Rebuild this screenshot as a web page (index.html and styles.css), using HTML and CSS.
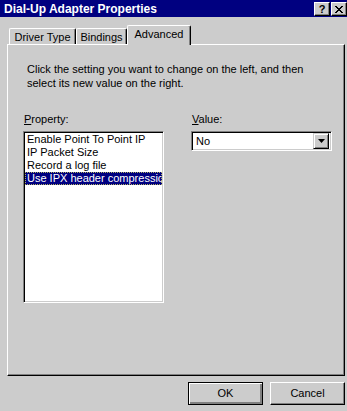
FILE: index.html
```html
<!DOCTYPE html>
<html>
<head>
<meta charset="utf-8">
<link rel="stylesheet" href="styles.css">
</head>
<body>
<div class="win">
  <div class="title">
    <span class="ttext">Dial-Up Adapter Properties</span>
    <div class="tbtns">
      <span class="tb help">?</span>
      <span class="tb close"><svg width="8" height="7" viewBox="0 0 8 7"><path d="M0 0h2v1h1v1h2v-1h1v-1h2v1h-1v1h-1v1h-1v1h1v1h1v1h1v1h-2v-1h-1v-1h-2v1h-1v1h-2v-1h1v-1h1v-1h1v-1h-1v-1h-1v-1h-1z" fill="#000"/></svg></span>
    </div>
  </div>
  <div class="tabs">
    <div class="tab t1">Driver Type</div>
    <div class="tab t2">Bindings</div>
    <div class="tab active">Advanced</div>
  </div>
  <div class="panel">
    <p class="desc">Click the setting you want to change on the left, and then<br>select its new value on the right.</p>
    <div class="cols">
      <div class="col">
        <div class="lbl"><u>P</u>roperty:</div>
        <div class="list">
          <div class="item">Enable Point To Point IP</div>
          <div class="item">IP Packet Size</div>
          <div class="item">Record a log file</div>
          <div class="item sel">Use IPX header compression</div>
        </div>
      </div>
      <div class="col">
        <div class="lbl"><u>V</u>alue:</div>
        <div class="combo">
          <span class="ctext">No</span>
          <span class="dd"><svg width="7" height="4" viewBox="0 0 7 4"><path d="M0 0h7l-3.5 4z" fill="#000"/></svg></span>
        </div>
      </div>
    </div>
  </div>
  <div class="buttons">
    <div class="btn default"><span class="bi">OK</span></div>
    <div class="btn"><span class="bi">Cancel</span></div>
  </div>
</div>
</body>
</html>
```
FILE: styles.css
```css
html, body {
  margin: 0;
  padding: 0;
}
body {
  width: 347px;
  height: 411px;
  overflow: hidden;
  background: #cccccc;
  font-family: "Liberation Sans", Arial, sans-serif;
  font-size: 11px;
  color: #000;
}
.win {
  width: 347px;
  height: 411px;
  display: flex;
  flex-direction: column;
}
.title {
  height: 17px;
  background: #000080;
  display: flex;
  align-items: center;
  justify-content: space-between;
}
.ttext {
  color: #fff;
  font-weight: bold;
  font-size: 12px;
  padding-left: 4px;
}
.tbtns {
  display: flex;
  gap: 1px;
  align-self: flex-start;
  margin-top: 2px;
}
.tb {
  box-sizing: border-box;
  width: 16px;
  height: 14px;
  background: #cccccc;
  border-top: 1px solid #fff;
  border-left: 1px solid #fff;
  border-right: 1px solid #000;
  border-bottom: 1px solid #000;
  box-shadow: inset -1px -1px 0 #808080;
  display: flex;
  align-items: center;
  justify-content: center;
  font-weight: bold;
  font-size: 11px;
  line-height: 1;
}
.tabs {
  display: flex;
  align-items: flex-end;
  height: 19px;
  margin-top: 8px;
  padding-left: 9px;
  position: relative;
  z-index: 1;
}
.tab {
  box-sizing: border-box;
  height: 16px;
  border-top: 1px solid #fff;
  border-left: 1px solid #fff;
  border-right: 1px solid #000;
  border-radius: 2px 2px 0 0;
  box-shadow: inset -1px 0 0 #808080;
  display: flex;
  align-items: center;
  justify-content: center;
  background: #cccccc;
}
.t1 { width: 67px; }
.t2 { width: 51px; }
.tab.active {
  width: 64px;
  height: 20px;
  margin-bottom: -1px;
  padding-bottom: 3px;
}
.panel {
  box-sizing: border-box;
  margin-left: 7px;
  width: 338px;
  height: 332px;
  border-top: 1px solid #fff;
  border-left: 1px solid #fff;
  border-right: 1px solid #000;
  border-bottom: 1px solid #000;
  box-shadow: inset -1px -1px 0 #808080;
  padding: 17px 0 0 15px;
}
.desc {
  margin: 0 0 0 4px;
  line-height: 14px;
}
.cols {
  display: flex;
  gap: 27px;
  margin-top: 22px;
}
.col {
  width: 141px;
}
.lbl {
  line-height: 14px;
  margin-left: 1px;
  margin-bottom: 5px;
}
.list {
  box-sizing: border-box;
  height: 172px;
  background: #fff;
  border-top: 1px solid #808080;
  border-left: 1px solid #808080;
  border-right: 1px solid #fff;
  border-bottom: 1px solid #fff;
  box-shadow: inset 1px 1px 0 #000, inset -1px -1px 0 #cccccc;
  padding: 1px 1px 1px 1px;
  overflow: hidden;
}
.item {
  height: 13px;
  line-height: 13px;
  padding-left: 2px;
  white-space: nowrap;
  overflow: hidden;
}
.item.sel {
  background: #000080;
  color: #fff;
  outline: 1px dotted #b0b060;
  outline-offset: -1px;
}
.combo {
  box-sizing: border-box;
  height: 20px;
  background: #fff;
  border-top: 1px solid #808080;
  border-left: 1px solid #808080;
  border-right: 1px solid #fff;
  border-bottom: 1px solid #fff;
  box-shadow: inset 1px 1px 0 #000, inset -1px -1px 0 #cccccc;
  padding: 1px 2px 1px 1px;
  display: flex;
  align-items: center;
  justify-content: space-between;
}
.ctext {
  padding-left: 3px;
}
.dd {
  box-sizing: border-box;
  width: 16px;
  height: 16px;
  background: #cccccc;
  border-top: 1px solid #cccccc;
  border-left: 1px solid #cccccc;
  border-right: 1px solid #000;
  border-bottom: 1px solid #000;
  box-shadow: inset 1px 1px 0 #fff, inset -1px -1px 0 #808080;
  display: flex;
  align-items: center;
  justify-content: center;
}
.buttons {
  display: flex;
  justify-content: flex-end;
  gap: 7px;
  margin-top: 6px;
  padding-right: 2px;
}
.btn {
  box-sizing: border-box;
  width: 75px;
  height: 23px;
  border-top: 1px solid #fff;
  border-left: 1px solid #fff;
  border-right: 1px solid #000;
  border-bottom: 1px solid #000;
  box-shadow: inset -1px -1px 0 #808080;
  display: flex;
  align-items: center;
  justify-content: center;
}
.btn.default {
  border: 1px solid #000;
  box-shadow: inset 1px 1px 0 #fff, inset -2px -2px 0 #808080, inset -1px -1px 0 #000;
}
.bi {
  line-height: 13px;
}
```
